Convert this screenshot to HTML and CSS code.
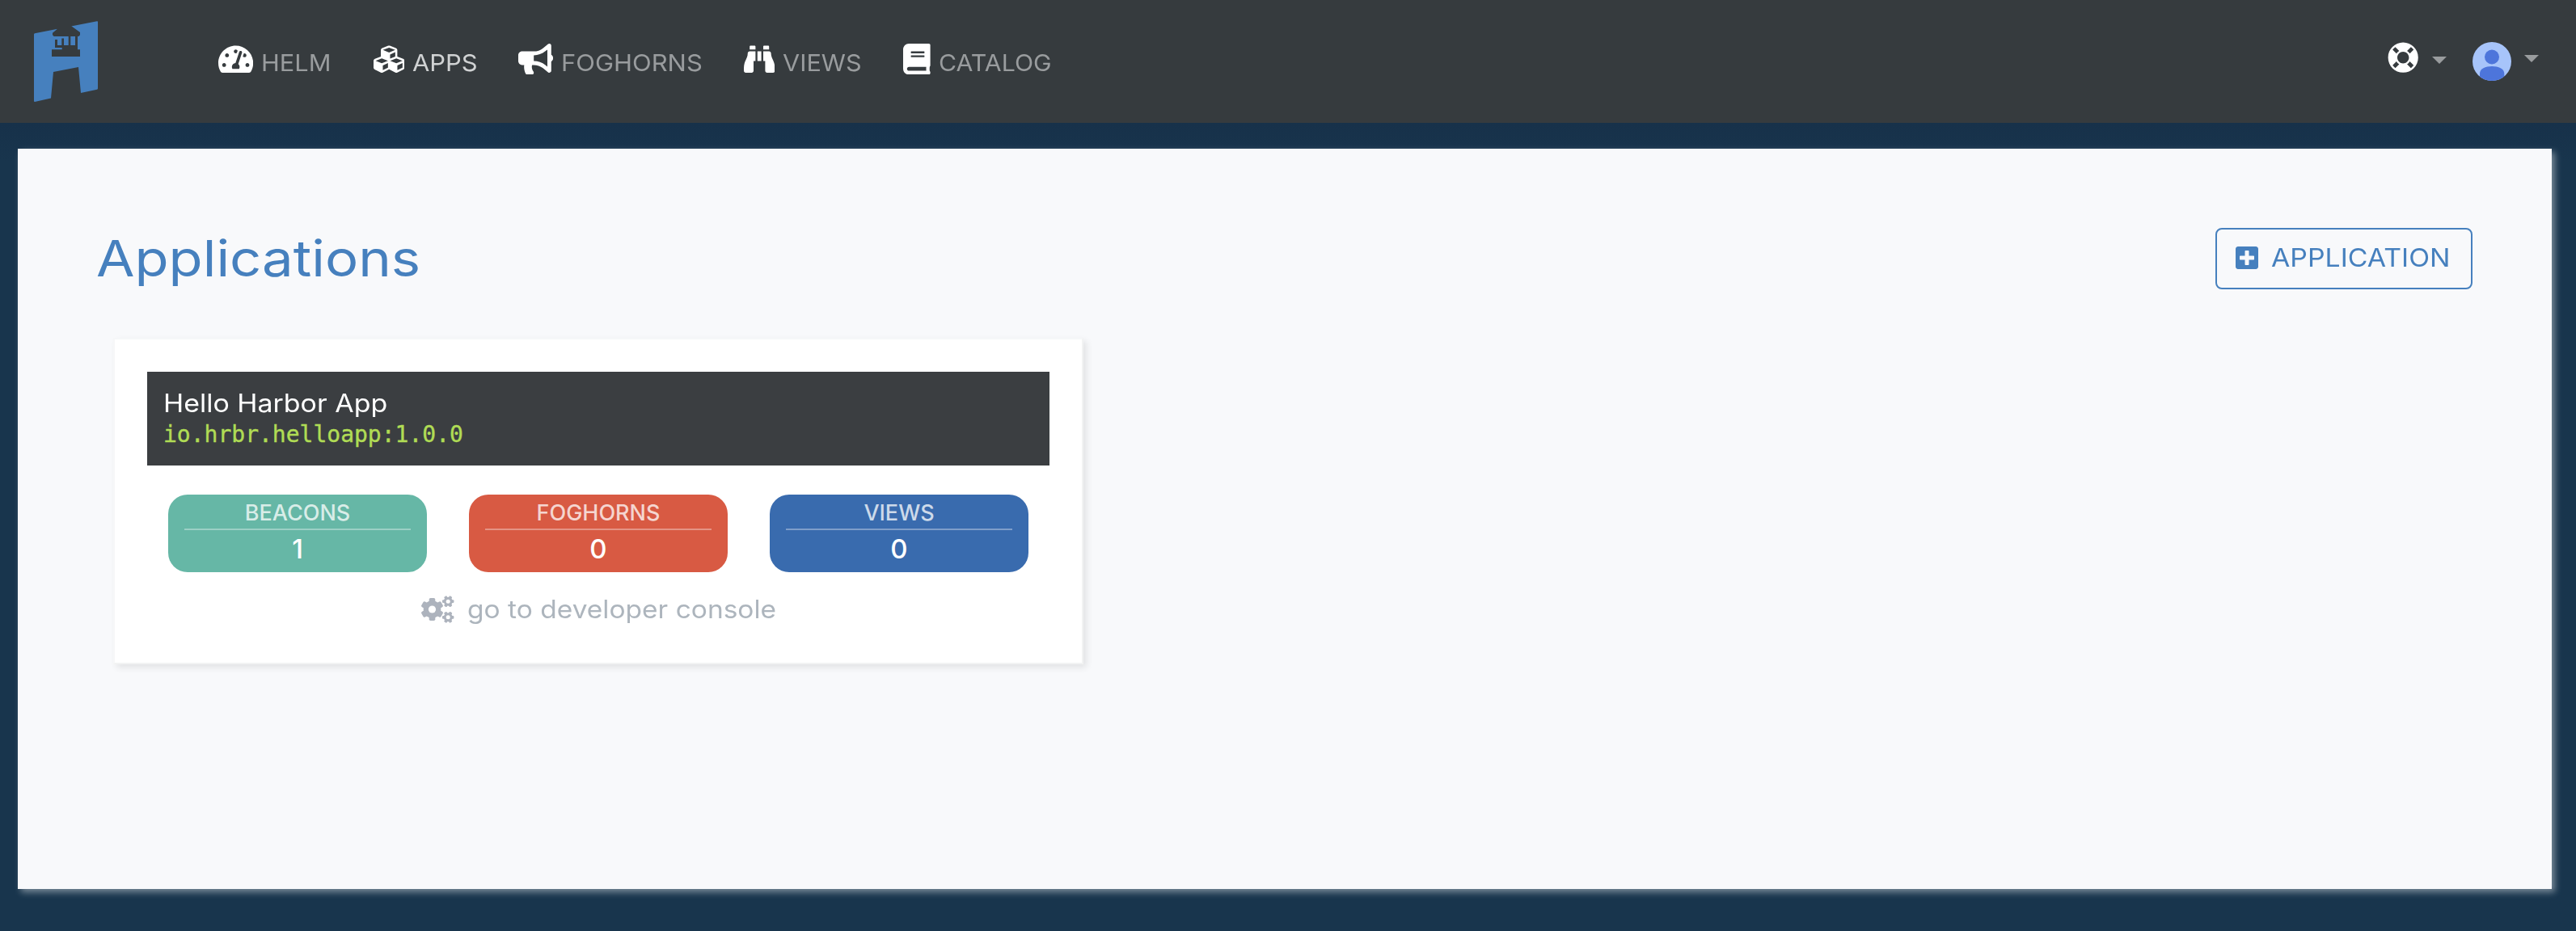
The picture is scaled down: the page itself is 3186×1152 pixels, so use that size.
FILE: index.html
```html
<!DOCTYPE html>
<html lang="en">
<head>
<meta charset="utf-8">
<title>Applications</title>
<link rel="stylesheet" href="styles.css">
</head>
<body>
<header class="navbar">
  <a class="brand" href="#" aria-label="Home">
    <svg width="80" height="101" viewBox="42 26 80 101">
      <path fill="#4680be" d="M42 42.500Q42 41.500 43 41.300L120 26.200Q121 26 121 27V109.500Q121 110.400 120 110.700L100 115 97 83 66 89 63 121.500 43 126Q42 126 42 125Z"/>
      <path fill="#363b3e" d="M70.700 36 65 40.700V43.300L66.700 45H97.300L99 43.300V40L88.300 32.300V26H70.700Z"/>
      <path fill="#363b3e" d="M68 49H71V56H76.300V47.500H79V56H84.700V45H87.300V56H93V45H96V61.300H99V70H64V61.300H76.700V59H68Z"/>
    </svg>
  </a>
  <nav class="links">
    <a class="link" href="#"><svg class="ico w576" viewBox="0 0 576 512"><path d="M288 32C128.94 32 0 160.94 0 320c0 52.8 14.25 102.26 39.06 144.8 5.61 9.62 16.3 15.2 27.44 15.2h443c11.14 0 21.83-5.58 27.44-15.2C561.75 422.26 576 372.8 576 320c0-159.06-128.94-288-288-288zm0 64c14.71 0 26.58 10.13 30.32 23.65-1.11 2.26-2.64 4.23-3.45 6.67l-9.22 27.67c-5.13 3.49-10.97 6.01-17.64 6.01-17.67 0-32-14.33-32-32S270.33 96 288 96zM96 384c-17.67 0-32-14.33-32-32s14.33-32 32-32 32 14.33 32 32-14.33 32-32 32zm48-160c-17.67 0-32-14.33-32-32s14.33-32 32-32 32 14.33 32 32-14.33 32-32 32zm246.77-72.41l-61.33 184C343.13 347.33 352 364.54 352 384c0 11.72-3.38 22.55-8.88 32H232.88c-5.5-9.45-8.88-20.28-8.88-32 0-33.94 26.5-61.43 59.9-63.59l61.34-184.01c4.17-12.56 17.73-19.45 30.36-15.17 12.57 4.19 19.35 17.79 15.17 30.36zm14.66 57.2l15.52-46.55c3.47-1.29 7.13-2.23 11.05-2.23 17.67 0 32 14.33 32 32s-14.33 32-32 32c-11.38-.01-20.89-6.28-26.57-15.22zM480 384c-17.67 0-32-14.33-32-32s14.33-32 32-32 32 14.33 32 32-14.33 32-32 32z"/></svg><span class="helm">HELM</span></a>
    <a class="link active" href="#"><svg class="ico w512" viewBox="0 0 512 512"><path d="M488.6 250.2L392 214V105.5c0-15-9.3-28.4-23.4-33.7l-100-37.5c-8.1-3.1-17.1-3.1-25.3 0l-100 37.5c-14.1 5.3-23.4 18.7-23.4 33.7V214l-96.6 36.2C9.3 255.5 0 268.9 0 283.9V394c0 13.6 7.7 26.1 19.9 32.2l100 50c10.1 5.1 22.1 5.1 32.2 0l103.9-52 103.9 52c10.1 5.1 22.1 5.1 32.2 0l100-50c12.2-6.1 19.9-18.6 19.9-32.2V283.9c0-15-9.3-28.4-23.4-33.7zM358 214.8l-85 31.9v-68.2l85-37v73.3zM154 104.1l102-38.2 102 38.2v.6l-102 41.4-102-41.4v-.6zm84 291.1l-85 42.5v-79.1l85-38.8v75.4zm0-112l-102 41.4-102-41.4v-.6l102-38.2 102 38.2v.6zm240 112l-85 42.5v-79.1l85-38.8v75.4zm0-112l-102 41.4-102-41.4v-.6l102-38.2 102 38.2v.6z"/></svg><span class="apps">APPS</span></a>
    <a class="link" href="#"><svg class="ico w576" viewBox="0 0 576 512"><path d="M576 240c0-23.63-12.95-44.04-32-55.12V32.01C544 23.26 537.02 0 512 0c-7.12 0-14.19 2.38-19.98 7.02l-85.03 68.03C364.28 109.19 310.66 128 256 128H64c-35.35 0-64 28.65-64 64v96c0 35.35 28.65 64 64 64h33.7c-1.39 10.48-2.18 21.14-2.18 32 0 39.77 9.26 77.35 25.56 110.94 5.19 10.69 16.52 17.06 28.4 17.06h74.28c26.05 0 41.69-29.84 25.9-50.56-16.4-21.52-26.15-48.36-26.15-77.44 0-11.11 1.62-21.79 4.41-32H256c54.66 0 108.28 18.81 150.98 52.95l85.03 68.03a32.023 32.023 0 0 0 19.98 7.02c24.92 0 32-22.78 32-32V295.13C563.05 284.04 576 263.63 576 240zm-96 141.42l-33.05-26.44C392.95 311.78 325.12 288 256 288v-96c69.12 0 136.95-23.78 190.95-66.98L480 98.58v282.84z"/></svg><span class="foghorns">FOGHORNS</span></a>
    <a class="link" href="#"><svg class="ico w512" viewBox="0 0 512 512"><path d="M416 48c0-8.84-7.16-16-16-16h-64c-8.84 0-16 7.16-16 16v48h96V48zM63.91 159.99C61.4 253.84 3.46 274.22 0 404v44c0 17.67 14.33 32 32 32h96c17.67 0 32-14.33 32-32V288h32V128H95.84c-17.63 0-31.45 14.37-31.93 31.99zm384.18 0c-.48-17.62-14.3-31.99-31.93-31.99H320v160h32v160c0 17.67 14.33 32 32 32h96c17.67 0 32-14.33 32-32v-44c-3.46-129.78-61.4-150.16-63.91-244.01zM176 32h-64c-8.84 0-16 7.16-16 16v48h96V48c0-8.84-7.16-16-16-16zm48 256h64V128h-64v160z"/></svg><span class="views">VIEWS</span></a>
    <a class="link" href="#"><svg class="ico w448" viewBox="0 0 448 512"><path d="M448 360V24c0-13.3-10.7-24-24-24H96C43 0 0 43 0 96v320c0 53 43 96 96 96h328c13.3 0 24-10.7 24-24v-16c0-7.5-3.5-14.3-8.9-18.7-4.2-15.4-4.2-59.3 0-74.7 5.4-4.3 8.9-11.1 8.9-18.6zM128 134c0-3.3 2.7-6 6-6h212c3.3 0 6 2.7 6 6v20c0 3.3-2.7 6-6 6H134c-3.3 0-6-2.7-6-6v-20zm0 64c0-3.3 2.7-6 6-6h212c3.3 0 6 2.7 6 6v20c0 3.3-2.7 6-6 6H134c-3.3 0-6-2.7-6-6v-20zm253.4 250H96c-17.7 0-32-14.3-32-32 0-17.6 14.4-32 32-32h285.4c-1.9 17.1-1.9 46.9 0 64z"/></svg><span class="catalog">CATALOG</span></a>
  </nav>
  <div class="tools">
    <svg class="ring" viewBox="0 0 512 512"><path d="M256 8C119.033 8 8 119.033 8 256s111.033 248 248 248 248-111.033 248-248S392.967 8 256 8zm173.696 119.559l-63.399 63.399c-10.987-18.559-26.67-34.252-45.255-45.255l63.399-63.399a218.396 218.396 0 0 1 45.255 45.255zM256 352c-53.019 0-96-42.981-96-96s42.981-96 96-96 96 42.981 96 96-42.981 96-96 96zM127.559 82.304l63.399 63.399c-18.559 10.987-34.252 26.67-45.255 45.255l-63.399-63.399a218.372 218.372 0 0 1 45.255-45.255zM82.304 384.441l63.399-63.399c10.987 18.559 26.67 34.252 45.255 45.255l-63.399 63.399a218.396 218.396 0 0 1-45.255-45.255zm302.137 45.255l-63.399-63.399c18.559-10.987 34.252-26.67 45.255-45.255l63.399 63.399a218.403 218.403 0 0 1-45.255 45.255z"/></svg>
    <span class="caret help"></span>
    <svg class="avatar" viewBox="0 0 48 48"><defs><clipPath id="disc"><circle cx="24" cy="24" r="24"/></clipPath></defs><g clip-path="url(#disc)"><rect width="48" height="48" fill="#a7c4fa"/><circle cx="24" cy="18.500" r="9" fill="#4d75db"/><path fill="#4d75db" d="M9 48V39C9 33 16 30 24 30S39.300 33 39.300 39V48Z"/></g></svg>
    <span class="caret user"></span>
  </div>
</header>
<main class="panel">
  <div class="heading">
    <h1>Applications</h1>
    <button class="add" type="button"><svg viewBox="0 0 448 512"><path d="M400 32H48C21.500 32 0 53.500 0 80v352c0 26.500 21.500 48 48 48h352c26.500 0 48-21.500 48-48V80c0-26.500-21.500-48-48-48zm-32 252c0 6.600-5.400 12-12 12h-92v92c0 6.600-5.400 12-12 12h-56c-6.600 0-12-5.400-12-12v-92H92c-6.600 0-12-5.400-12-12v-56c0-6.600 5.400-12 12-12h92v-92c0-6.600 5.400-12 12-12h56c6.600 0 12 5.400 12 12v92h92c6.600 0 12 5.400 12 12v56z"/></svg><span>APPLICATION</span></button>
  </div>
  <section class="card">
    <div class="title">
      <div class="name">Hello Harbor App</div>
      <div class="id">io.hrbr.helloapp:1.0.0</div>
    </div>
    <div class="stats">
      <div class="stat beacons"><div class="label">BEACONS</div><div class="value">1</div></div>
      <div class="stat horns"><div class="label">FOGHORNS</div><div class="value">0</div></div>
      <div class="stat view"><div class="label">VIEWS</div><div class="value">0</div></div>
    </div>
    <a class="console" href="#">
      <svg width="41" height="34" viewBox="0 0 41 34">
        <defs>
          <mask id="holes"><rect width="41" height="34" fill="#fff"/><circle cx="13.500" cy="17" r="4.600" fill="#000"/><circle cx="33.200" cy="7.200" r="2.500" fill="#000"/><circle cx="33.200" cy="26.800" r="2.500" fill="#000"/></mask>
          <g id="gear"><circle r="5.500"/><rect x="-7.200" y="-1.900" width="14.400" height="3.800" rx="1"/><rect x="-7.200" y="-1.900" width="14.400" height="3.800" rx="1" transform="rotate(60)"/><rect x="-7.200" y="-1.900" width="14.400" height="3.800" rx="1" transform="rotate(120)"/></g>
        </defs>
        <g mask="url(#holes)"><g transform="translate(13.500 17)"><circle r="10.800"/><rect x="-3.800" y="-14" width="7.600" height="28" rx="1.800"/><rect x="-3.800" y="-14" width="7.600" height="28" rx="1.800" transform="rotate(60)"/><rect x="-3.800" y="-14" width="7.600" height="28" rx="1.800" transform="rotate(120)"/></g><use href="#gear" x="33.200" y="7.200"/><use href="#gear" x="33.200" y="26.800"/></g>
      </svg>
      <span>go to developer console</span>
    </a>
  </section>
</main>
</body>
</html>
```
FILE: styles.css
```css
* { box-sizing: border-box; }
body { margin: 0; height: 1152px; background: linear-gradient(#17314a 152px, #18354d 200px); font-family: Inter, "Liberation Sans", sans-serif; overflow: hidden; }
a { text-decoration: none; color: inherit; }
svg { display: block; flex: none; }

.navbar { height: 152px; background: #363b3e; display: flex; align-items: flex-start; }
.brand { padding: 26px 0 0 42px; width: 270px; }
.links { display: grid; grid-template-columns: 192px 179px 279px 197px 190px; padding-top: 54px; }
.link { display: flex; align-items: flex-start; gap: 10px; color: #999c9e; font-size: 29px; line-height: 39px; }
.link span { padding-top: 4px; transform-origin: left; }
.link.active { color: #d0d2d3; }
.ico { height: 38.4px; fill: #fff; }
.w576 { width: 43.2px; }
.w512 { width: 38.4px; }
.w448 { width: 33.6px; }
.helm { transform: scaleX(1.06); }
.apps { transform: scaleX(1.066); }
.foghorns { transform: scaleX(1.067); }
.views { transform: scaleX(1.057); }
.catalog { transform: scaleX(1.044); }

.tools { display: flex; align-items: flex-start; margin-left: auto; padding: 52px 46px 0 0; }
.ring { width: 38.4px; height: 38.4px; fill: #fff; }
.caret { border: 9px solid transparent; border-top-color: #999c9e; border-bottom: 0; }
.help { margin: 18px 32px 0 17px; }
.avatar { width: 48px; height: 48px; }
.user { margin: 16px 0 0 16px; }

.panel { margin: 32px 30px 0 22px; height: 916px; padding: 98px 98px 0; background: #f8f9fb; box-shadow: 4px 4px 8px rgba(255, 255, 255, .42); }
.heading { display: flex; justify-content: space-between; height: 76px; }
h1 { margin: 0 0 0 -1px; color: #4680be; font-size: 62px; font-weight: 400; line-height: 75px; transform: scaleX(1.11); transform-origin: left; }
.add { display: flex; align-items: center; width: 318px; height: 76px; padding: 0 0 2px 23px; gap: 16px; border: 2px solid #4680be; border-radius: 8px; background: none; color: #4680be; fill: #4680be; font: 400 31px/40px Inter, sans-serif; }
.add svg { width: 28px; height: 32px; }
.add span { transform: scaleX(1.091); transform-origin: left; }

.card { width: 1200px; height: 404px; margin: 60px 0 0 20px; padding: 40px; border: 2px solid #f2f3f3; border-left-color: #f6f7f8; border-top-color: #f6f7f8; background: #fff; box-shadow: 4px 4px 8px rgba(0, 0, 0, .09); }
.title { height: 116px; padding: 21px 20px 0; background: #3b3e41; color: #fff; }
.name { font-size: 31px; line-height: 36px; transform: scaleX(1.094); transform-origin: left; }
.id { color: #b0dc55; font: 28px/42px "DejaVu Sans Mono", monospace; -webkit-text-stroke: .4px #b0dc55; }
.stats { display: grid; grid-template-columns: repeat(3, 320px); gap: 52px; margin: 36px 26px 0; }
.stat { height: 96px; padding: 4px 20px 0; border-radius: 24px; color: #fff; text-align: center; }
.beacons { background: #66b7a6; }
.horns { background: #d85a43; }
.view { background: #396bae; }
.label { height: 40px; line-height: 38px; font-size: 27px; font-weight: 500; color: rgba(255, 255, 255, .75); border-bottom: 2px solid rgba(255, 255, 255, .35); }
.value { line-height: 46px; font-size: 33px; font-weight: 500; }
.console { display: flex; justify-content: center; align-items: center; gap: 16px; margin-top: 26px; height: 40px; color: #adb5bd; fill: #adb3bd; font-size: 31px; line-height: 40px; }
.console span { width: 382px; white-space: nowrap; transform: scaleX(1.081); transform-origin: left; }
```
